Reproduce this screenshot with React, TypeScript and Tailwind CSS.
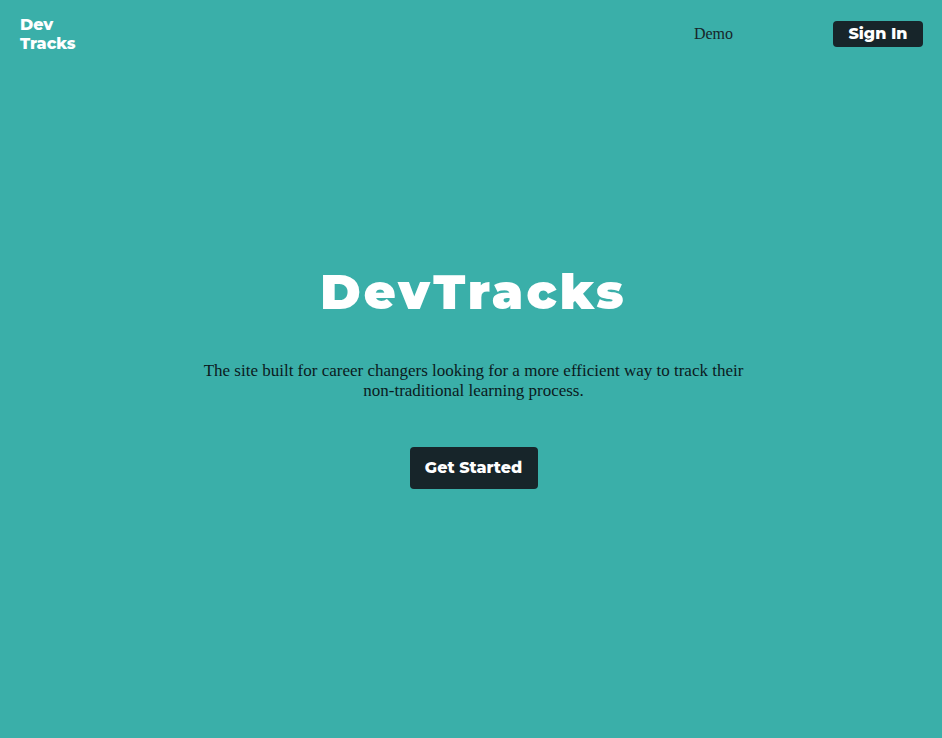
export default function App() {
  return (
    <div className="flex min-h-screen flex-col bg-[#3aafa9] font-['Liberation_Serif',serif] text-[#17252a]">
      <header className="flex items-center justify-between py-[15px] pr-[19px] pl-5">
        <a href="#home" className="w-16 font-['Montserrat','Inter',sans-serif] text-base leading-[19px] font-extrabold text-white">
          Dev Tracks
        </a>
        <nav className="flex items-center gap-[100px]">
          <a href="#demo" className="text-base">Demo</a>
          <button type="button" className="h-[26px] w-[90px] rounded bg-[#17252a] font-['Montserrat','Inter',sans-serif] text-base leading-none font-extrabold text-white">
            Sign In
          </button>
        </nav>
      </header>
      <main className="flex flex-col items-center pt-[193px] pr-5 pl-[25px] text-center">
        <h1 className="font-['Montserrat','Inter',sans-serif] text-[49px] leading-[62px] font-black tracking-[3px] text-white">
          DevTracks
        </h1>
        <p className="mt-[38px] max-w-[550px] text-[17px] leading-5 text-[#0b1a1d]">
          The site built for career changers looking for a more efficient way to track their non-traditional learning process.
        </p>
        <button type="button" className="mt-[46px] h-[42px] w-32 rounded bg-[#17252a] font-['Montserrat','Inter',sans-serif] text-base font-extrabold text-white">
          Get Started
        </button>
      </main>
    </div>
  );
}
